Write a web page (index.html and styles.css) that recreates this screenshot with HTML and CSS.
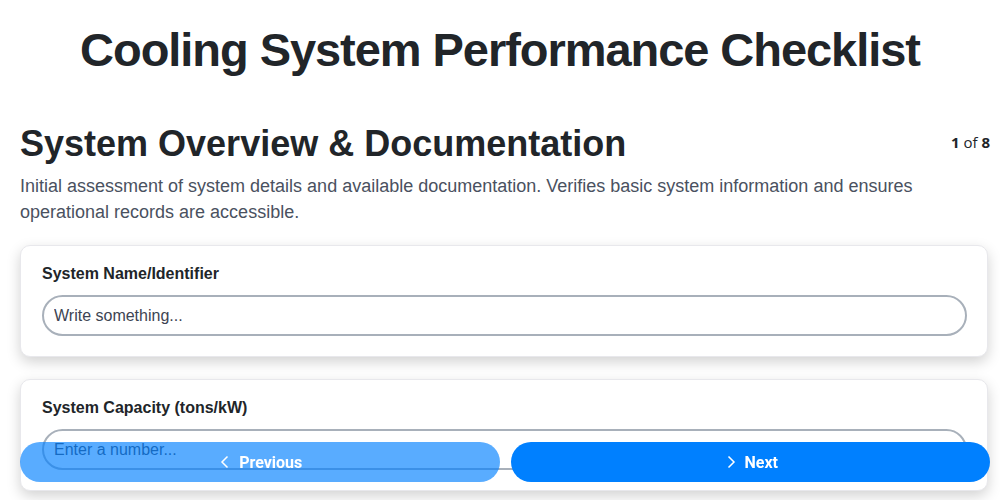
FILE: index.html
```html
<!DOCTYPE html>
<html lang="en">
<head>
    <meta charset="UTF-8">
    <meta name="viewport" content="width=device-width, initial-scale=1.0">
    <title>Cooling System Performance Checklist</title>
    <link rel="stylesheet" href="styles.css">
</head>
<body>

<h1 class="page-title">Cooling System Performance Checklist</h1>

<section class="step">
    <div class="step-head">
        <h2>System Overview &amp; Documentation</h2>
        <span class="step-count"><b>1</b> of <b>8</b></span>
    </div>
    <p class="step-desc">Initial assessment of system details and available documentation. Verifies basic system information and ensures operational records are accessible.</p>

    <div class="card">
        <label for="sysName">System Name/Identifier</label>
        <input id="sysName" type="text" placeholder="Write something...">
    </div>

    <div class="card">
        <label for="sysCap">System Capacity (tons/kW)</label>
        <input id="sysCap" type="text" placeholder="Enter a number...">
    </div>
</section>

<!-- navigation -->
<div class="nav">
    <button class="nav-btn prev">
        <svg width="16" height="16" viewBox="0 0 16 16"><path d="M10.5 2.5 L5 8 L10.5 13.5" fill="none" stroke="white" stroke-width="1.5"/></svg>
        Previous
    </button>
    <button class="nav-btn next">
        <svg width="16" height="16" viewBox="0 0 16 16"><path d="M5.5 2.5 L11 8 L5.5 13.5" fill="none" stroke="white" stroke-width="1.5"/></svg>
        Next
    </button>
</div>

</body>
</html>
```

FILE: styles.css
```css
/* page */
body {
    font-family: "Liberation Sans", Arial, sans-serif;
    margin: 0;
    padding: 0 10px 0 20px;
    background-color: white;
    color: #212529;
}

.page-title {
    font-size: 47px;
    letter-spacing: -1.05px;
    text-align: center;
    margin: 24px 0 0 -10px;
    line-height: 52px;
}

.step-head {
    display: flex;
    justify-content: space-between;
    align-items: flex-start;
    margin-top: 46px;
}

.step-head h2 {
    font-size: 36px;
    margin: 0;
    line-height: 44px;
}

.step-count {
    font-family: "Open Sans", sans-serif;
    font-size: 15px;
    margin-top: 10px;
}

.step-desc {
    font-size: 18px;
    line-height: 26px;
    color: #4a5160;
    margin: 7px 0 20px;
}

/* cards */
.card {
    background-color: #fff;
    border: 1px solid #e8e8ec;
    border-radius: 10px;
    box-shadow: 0 5px 14px rgba(0, 0, 0, 0.18);
    padding: 19px 20px 20px 21px;
    margin: 0 2px 22px 0;
}

.card label {
    display: block;
    font-weight: bold;
    font-size: 16px;
    margin-bottom: 12px;
}

.card input {
    display: block;
    box-sizing: border-box;
    width: 100%;
    height: 41px;
    border: 2px solid #a8b0ba;
    border-radius: 21px;
    padding: 0 10px;
    font-family: "Liberation Sans", Arial, sans-serif;
    font-size: 16px;
    outline: none;
}

.card input::placeholder {
    color: #3d4452;
}

/* bottom navigation */
.nav {
    position: fixed;
    left: 20px;
    right: 10px;
    bottom: 18px;
    display: flex;
    gap: 11px;
}

.nav-btn {
    flex: 1;
    height: 40px;
    border: none;
    border-radius: 20px;
    color: white;
    font-family: Roboto, sans-serif;
    font-weight: bold;
    font-size: 16px;
    display: flex;
    justify-content: center;
    align-items: center;
    gap: 6px;
}

.prev {
    background-color: rgba(0, 128, 255, 0.65);
}

.next {
    background-color: #0080ff;
}
```
